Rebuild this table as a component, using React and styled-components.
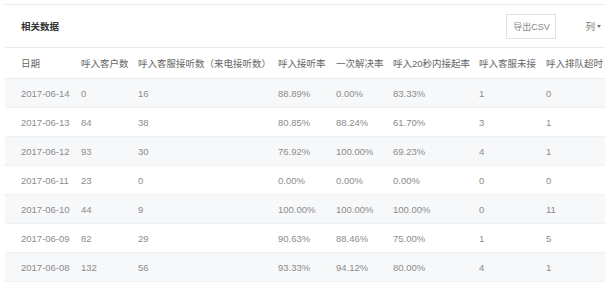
import React from 'react';
import styled, { createGlobalStyle } from 'styled-components';

const GlobalStyle = createGlobalStyle`
  body {
    margin: 0;
    background: #fff;
    font-family: "Liberation Sans", "Noto Sans CJK SC", sans-serif;
  }
`;

const Panel = styled.div`
  width: 600px;
  margin: 4px 0 0 5px;
  border-top: 1px solid #e8e8e8;
`;

const Toolbar = styled.div`
  display: flex;
  align-items: center;
  height: 42px;
  padding: 0 4px 0 16px;
`;

const Title = styled.h3`
  flex: 1;
  margin: 0;
  font-size: 9.5px;
  font-weight: bold;
  color: #333;
`;

const ExportButton = styled.button`
  width: 50px;
  height: 25px;
  margin-right: 29px;
  padding: 0;
  border: 1px solid #e2e2e2;
  background: #fff;
  color: #888;
  font-family: inherit;
  font-size: 9px;
`;

const ColumnMenu = styled.span`
  display: flex;
  align-items: center;
  gap: 2px;
  color: #777;
  font-size: 9.5px;
`;

const Caret = styled.span`
  width: 0;
  height: 0;
  border-left: 2.5px solid transparent;
  border-right: 2.5px solid transparent;
  border-top: 3px solid #777;
`;

const columns = '76px 57px 140px 58px 57px 86px 67px 59px';

const HeadRow = styled.div`
  display: grid;
  grid-template-columns: ${columns};
  height: 30px;
  align-items: center;
  border-top: 1px solid #e9ecee;
  border-bottom: 1px solid #e9ecee;
  color: #666;
  font-size: 9.5px;
  white-space: nowrap;
`;

const Row = styled.div`
  display: grid;
  grid-template-columns: ${columns};
  height: 28px;
  align-items: center;
  border-bottom: 1px solid #eef0f2;
  background: ${(p) => (p.striped ? '#f6f8fa' : '#fff')};
  color: #8c8c8c;
  font-size: 9.5px;
  white-space: nowrap;
`;

const Cell = styled.span`
  padding-left: ${(p) => (p.first ? '16px' : '0')};
`;

const headers = ['日期', '呼入客户数', '呼入客服接听数（来电接听数）', '呼入接听率', '一次解决率', '呼入20秒内接起率', '呼入客服未接', '呼入排队超时'];

const rows = [
  ['2017-06-14', '0', '16', '88.89%', '0.00%', '83.33%', '1', '0'],
  ['2017-06-13', '84', '38', '80.85%', '88.24%', '61.70%', '3', '1'],
  ['2017-06-12', '93', '30', '76.92%', '100.00%', '69.23%', '4', '1'],
  ['2017-06-11', '23', '0', '0.00%', '0.00%', '0.00%', '0', '0'],
  ['2017-06-10', '44', '9', '100.00%', '100.00%', '100.00%', '0', '11'],
  ['2017-06-09', '82', '29', '90.63%', '88.46%', '75.00%', '1', '5'],
  ['2017-06-08', '132', '56', '93.33%', '94.12%', '80.00%', '4', '1'],
];

export default function App() {
  return (
    <>
      <GlobalStyle />
      <Panel>
        <Toolbar>
          <Title>相关数据</Title>
          <ExportButton>导出CSV</ExportButton>
          <ColumnMenu>列<Caret /></ColumnMenu>
        </Toolbar>
        <HeadRow>
          {headers.map((h, i) => (
            <Cell key={h} first={i === 0}>{h}</Cell>
          ))}
        </HeadRow>
        {rows.map((r, ri) => (
          <Row key={r[0]} striped={ri % 2 === 0}>
            {r.map((v, i) => (
              <Cell key={i} first={i === 0}>{v}</Cell>
            ))}
          </Row>
        ))}
      </Panel>
    </>
  );
}
